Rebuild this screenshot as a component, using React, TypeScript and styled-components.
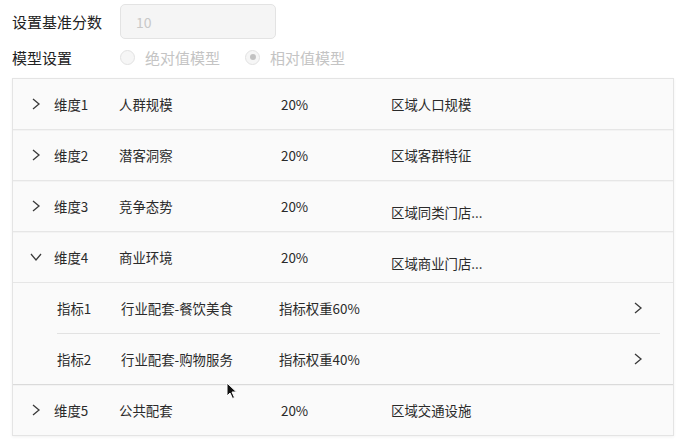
import styled, { createGlobalStyle } from "styled-components";

const GlobalStyle = createGlobalStyle`
  body {
    margin: 0;
    background: #ffffff;
    font-family: "Noto Sans CJK SC", "Noto Sans", sans-serif;
    color: #2b2b2b;
  }
`;

const Page = styled.div`
  position: relative;
  width: 685px;
  height: 444px;
  padding: 3px 11px 0 12px;
  box-sizing: border-box;
`;

const FieldRow = styled.div<{ $h: number; $top?: number }>`
  display: flex;
  align-items: center;
  height: ${(p) => p.$h}px;
  margin-top: ${(p) => p.$top ?? 0}px;
`;

const FieldLabel = styled.label`
  width: 108px;
  font-size: 15px;
  color: #222;
`;

const ScoreInput = styled.input`
  width: 156px;
  height: 35px;
  box-sizing: border-box;
  border: 1px solid #e3e3e3;
  border-radius: 5px;
  background: #f5f5f5;
  padding: 0 15px;
  font-size: 14px;
  color: #c8c8c8;
  font-family: inherit;
`;

const RadioItem = styled.span`
  display: flex;
  align-items: center;
  margin-right: 25px;
  font-size: 15px;
  color: #c4c4c4;
`;

const RadioDot = styled.span<{ $checked?: boolean }>`
  width: 15px;
  height: 15px;
  box-sizing: border-box;
  border-radius: 50%;
  border: 1px solid #e2e2e2;
  background: #f6f6f6;
  margin-right: 10px;
  display: flex;
  align-items: center;
  justify-content: center;
  &::after {
    content: "";
    width: 6px;
    height: 6px;
    border-radius: 50%;
    background: ${(p) => (p.$checked ? "#c2c2c2" : "transparent")};
  }
`;

const Panel = styled.div`
  margin-top: 6px;
  border: 1px solid #e4e4e4;
  background: #fafafa;
  box-shadow: 0 1px 3px rgba(0, 0, 0, 0.06);
`;

const DimGroup = styled.div<{ $strong?: boolean }>`
  border-top: 1px solid ${(p) => (p.$strong ? "#dadada" : "#e6e6e6")};
  box-shadow: inset 0 1px 1px rgba(0, 0, 0, 0.03);
  &:first-child {
    border-top: none;
    box-shadow: none;
  }
`;

const DimRow = styled.div`
  display: grid;
  grid-template-columns: 24px 65px 162px 110px 1fr;
  align-items: center;
  height: 50px;
  padding-left: 17px;
  font-size: 13.4px;
  color: #2a2a2a;
`;

const Desc = styled.span<{ $drop?: boolean }>`
  padding-top: ${(p) => (p.$drop ? 12 : 0)}px;
`;

const SubList = styled.div`
  border-top: 1px solid #e6e6e6;
  padding: 0 13px 0 44px;
`;

const SubRow = styled.div`
  display: grid;
  grid-template-columns: 64px 158px 1fr 28px;
  align-items: center;
  height: 50px;
  font-size: 13.4px;
  color: #2a2a2a;
  & + & {
    border-top: 1px solid #e2e2e2;
  }
`;

const Chevron = ({ down }: { down?: boolean }) => (
  <svg width="12" height="14" viewBox="0 0 12 14">
    {down ? (
      <polyline points="1,4 6,10 11,4" fill="none" stroke="#3a3a3a" strokeWidth="1.3" />
    ) : (
      <polyline points="3,2 9,7 3,12" fill="none" stroke="#3a3a3a" strokeWidth="1.3" />
    )}
  </svg>
);

const Cursor = styled.svg`
  position: absolute;
  left: 226px;
  top: 382px;
`;

type Dim = { id: number; name: string; pct: string; desc: string; drop?: boolean; open?: boolean };

const dims: Dim[] = [
  { id: 1, name: "人群规模", pct: "20%", desc: "区域人口规模" },
  { id: 2, name: "潜客洞察", pct: "20%", desc: "区域客群特征" },
  { id: 3, name: "竞争态势", pct: "20%", desc: "区域同类门店...", drop: true },
  { id: 4, name: "商业环境", pct: "20%", desc: "区域商业门店...", drop: true, open: true },
  { id: 5, name: "公共配套", pct: "20%", desc: "区域交通设施" },
];

const subs = [
  { id: 1, name: "行业配套-餐饮美食", weight: "指标权重60%" },
  { id: 2, name: "行业配套-购物服务", weight: "指标权重40%" },
];

export default function App() {
  return (
    <>
      <GlobalStyle />
      <Page>
        <FieldRow $h={37}>
          <FieldLabel>设置基准分数</FieldLabel>
          <ScoreInput value="10" disabled readOnly />
        </FieldRow>
        <FieldRow $h={30} $top={2}>
          <FieldLabel>模型设置</FieldLabel>
          <RadioItem>
            <RadioDot />
            绝对值模型
          </RadioItem>
          <RadioItem>
            <RadioDot $checked />
            相对值模型
          </RadioItem>
        </FieldRow>
        <Panel>
          {dims.map((d, i) => (
            <DimGroup key={d.id} $strong={i > 0 && dims[i - 1].open}>
              <DimRow>
                <Chevron down={d.open} />
                <span>维度{d.id}</span>
                <span>{d.name}</span>
                <span>{d.pct}</span>
                <Desc $drop={d.drop}>{d.desc}</Desc>
              </DimRow>
              {d.open && (
                <SubList>
                  {subs.map((s) => (
                    <SubRow key={s.id}>
                      <span>指标{s.id}</span>
                      <span>{s.name}</span>
                      <span>{s.weight}</span>
                      <Chevron />
                    </SubRow>
                  ))}
                </SubList>
              )}
            </DimGroup>
          ))}
        </Panel>
        <Cursor width="12" height="18" viewBox="0 0 12 18">
          <path d="M1 1 L1 14 L4 11 L6.5 16.5 L8.5 15.5 L6 10 L10.5 10 Z" fill="#111" stroke="#fff" strokeWidth="1" />
        </Cursor>
      </Page>
    </>
  );
}
